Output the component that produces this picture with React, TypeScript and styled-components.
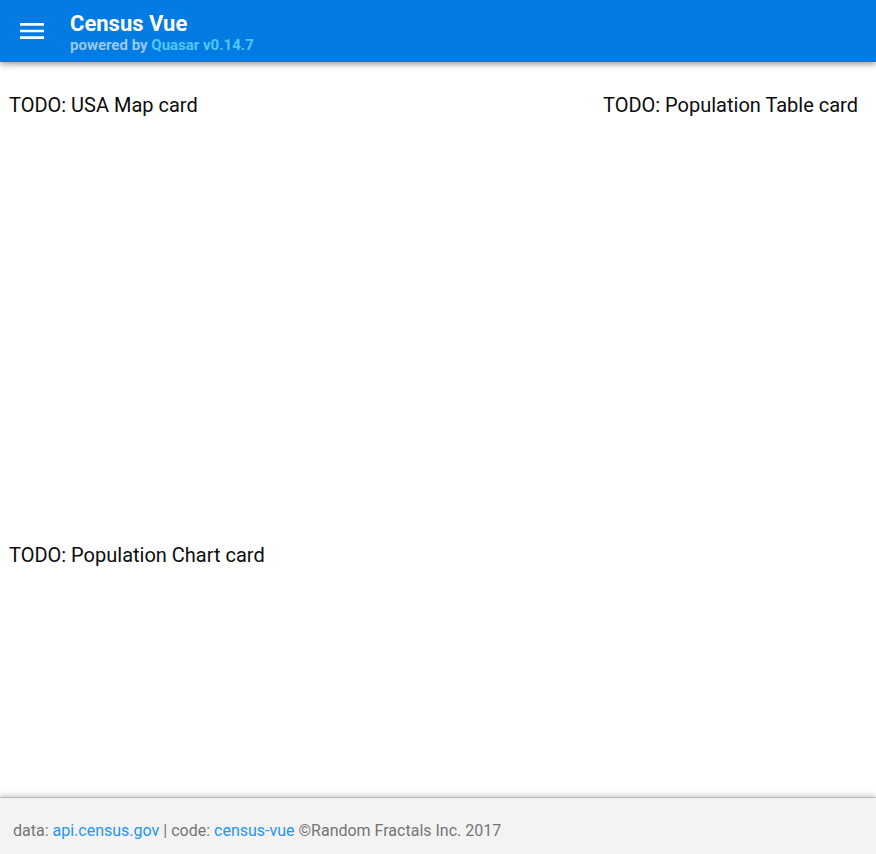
import React from 'react';
import styled, { createGlobalStyle } from 'styled-components';

const GlobalStyle = createGlobalStyle`
  html, body {
    margin: 0;
    padding: 0;
    height: 100%;
  }
  body {
    font-family: Roboto, "Noto Sans", sans-serif;
    color: #0c0c0c;
    background: #fff;
  }
  #root {
    height: 100%;
  }
`;

function MenuIcon(): JSX.Element {
  return <svg width="32" height="32" viewBox="0 0 24 24" fill="#fff">
    <path d="M3 18h18v-2H3v2zm0-5h18v-2H3v2zm0-7v2h18V6H3z"/>
  </svg>;
}

export default function App(): JSX.Element {
  return <Layout>
    <GlobalStyle/>
    <Header>
      <MenuButton><MenuIcon/></MenuButton>
      <TitleBlock>
        <Title>Census Vue</Title>
        <Subtitle>powered by <QuasarLink>Quasar v0.14.7</QuasarLink></Subtitle>
      </TitleBlock>
    </Header>
    <Main>
      <TopRow>
        <CardText>TODO: USA Map card</CardText>
        <CardText>TODO: Population Table card</CardText>
      </TopRow>
      <BottomRow>
        <CardText>TODO: Population Chart card</CardText>
      </BottomRow>
    </Main>
    <Footer>
      <FooterText>
        data: <FooterLink>api.census.gov</FooterLink> | code: <FooterLink>census-vue</FooterLink> ©Random Fractals Inc. 2017
      </FooterText>
    </Footer>
  </Layout>;
}

const Layout = styled.div`
  display: flex;
  flex-direction: column;
  height: 854px;
`;

const Header = styled.header`
  height: 62px;
  flex-shrink: 0;
  background: #027be3;
  display: flex;
  align-items: center;
  padding: 0 16px;
  box-shadow: 0 2px 4px -1px rgba(0, 0, 0, 0.2), 0 4px 5px rgba(0, 0, 0, 0.14), 0 1px 10px rgba(0, 0, 0, 0.12);
  position: relative;
  z-index: 2;
`;

const MenuButton = styled.div`
  width: 32px;
  height: 32px;
  display: flex;
  margin-right: 22px;
`;

const TitleBlock = styled.div`
  display: flex;
  flex-direction: column;
  margin-top: 4px;
`;

const Title = styled.div`
  color: #fff;
  font-size: 22px;
  font-weight: 700;
  line-height: 24px;
`;

const Subtitle = styled.div`
  color: rgba(255, 255, 255, 0.6);
  font-size: 15px;
  font-weight: 700;
  line-height: 19px;
`;

const QuasarLink = styled.span`
  color: #53c6f7;
`;

const Main = styled.main`
  flex: 1;
  display: flex;
  flex-direction: column;
  padding: 29px 18px 0 9px;
`;

const TopRow = styled.div`
  display: flex;
  justify-content: space-between;
  height: 450px;
`;

const BottomRow = styled.div`
  display: flex;
`;

const CardText = styled.div`
  font-size: 20px;
  line-height: 28px;
`;

const Footer = styled.footer`
  height: 56px;
  flex-shrink: 0;
  background: #f3f3f3;
  display: flex;
  align-items: center;
  padding: 0 13px;
  box-shadow: 0 -1px 6px rgba(0, 0, 0, 0.25);
  border-top: 1px solid #bdbdbd;
`;

const FooterText = styled.div`
  color: #757575;
  font-size: 16px;
  padding-top: 8px;
`;

const FooterLink = styled.span`
  color: #2196f3;
`;
